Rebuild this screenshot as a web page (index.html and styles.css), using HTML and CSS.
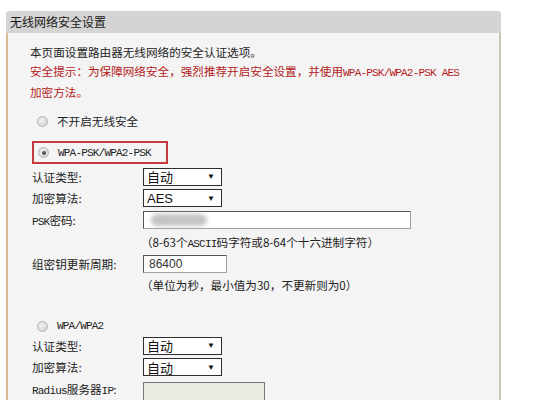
FILE: index.html
```html
<!DOCTYPE html>
<html lang="zh-CN">
<head>
    <meta charset="UTF-8">
    <meta name="viewport" content="width=device-width, initial-scale=1.0">
    <title>无线网络安全设置</title>
    <link rel="stylesheet" href="styles.css">
</head>
<body>
    <div class="panel">
        <div class="panel-title">无线网络安全设置</div>
        <div class="panel-body">
            <p class="intro">本页面设置路由器无线网络的安全认证选项。</p>
            <p class="warn">安全提示：为保障网络安全，强烈推荐开启安全设置，并使用<span class="en">WPA-PSK/WPA2-PSK AES</span><br>加密方法。</p>

            <div class="option"><span class="radio"></span>不开启无线安全</div>

            <div class="option boxed"><span class="radio checked"></span><span class="en">WPA-PSK/WPA2-PSK</span></div>
            <div class="row">
                <span class="label">认证类型:</span>
                <div class="select">自动<span class="arrow">▼</span></div>
            </div>
            <div class="row">
                <span class="label">加密算法:</span>
                <div class="select">AES<span class="arrow">▼</span></div>
            </div>
            <div class="row">
                <span class="label"><span class="en">PSK</span>密码:</span>
                <div class="input wide"><span class="blur"></span></div>
            </div>
            <div class="hint">（8-63个<span class="en">ASCII</span>码字符或8-64个十六进制字符）</div>
            <div class="row">
                <span class="label">组密钥更新周期:</span>
                <div class="input short">86400</div>
            </div>
            <div class="hint">（单位为秒，最小值为30，不更新则为0）</div>

            <div class="option second"><span class="radio"></span><span class="en">WPA/WPA2</span></div>
            <div class="row">
                <span class="label">认证类型:</span>
                <div class="select">自动<span class="arrow">▼</span></div>
            </div>
            <div class="row">
                <span class="label">加密算法:</span>
                <div class="select">自动<span class="arrow">▼</span></div>
            </div>
            <div class="row">
                <span class="label"><span class="en">Radius</span>服务器<span class="en">IP</span>:</span>
                <div class="input disabled"></div>
            </div>
        </div>
    </div>
</body>
</html>
```

FILE: styles.css
```css
body {
    margin: 0;
    background: #fff;
    font-family: "Noto Sans CJK SC", sans-serif;
    font-size: 11.6px;
    color: #222;
    overflow: hidden;
}
.panel {
    margin: 11px 0 0 6px;
    width: 495px;
}
.panel-title {
    height: 22px;
    line-height: 22px;
    padding-left: 4px;
    background: #d4d4d4;
    border-radius: 3px 3px 0 0;
    font-size: 12px;
    color: #1a1a1a;
}
.panel-body {
    height: 357px;
    padding: 10px 0 0 22px;
    background: #f4f4f4;
    border-left: 2px solid #dcb98e;
    border-right: 2px solid #cbc6b4;
    overflow: hidden;
}
.intro, .warn {
    margin: 0;
    line-height: 19px;
}
.warn {
    color: #b31b1b;
}
.en {
    font-family: "Liberation Mono", monospace;
    font-size: 11px;
    letter-spacing: -0.8px;
}
.option {
    display: flex;
    align-items: center;
    height: 18px;
    margin: 10px 0 0 2px;
    padding-left: 5px;
    gap: 9px;
}
.option.boxed {
    width: 128px;
    height: 19px;
    margin-top: 11px;
    padding-left: 4px;
    border: 2px solid #c53a40;
}
.option.second {
    margin-top: 22px;
}
.radio {
    width: 11px;
    height: 11px;
    border-radius: 50%;
    border: 1px solid #b4b4b4;
    background: radial-gradient(circle at 40% 40%, #f2f2f2, #cdcdcd);
    box-sizing: border-box;
    display: flex;
    align-items: center;
    justify-content: center;
}
.radio.checked::after {
    content: "";
    width: 4px;
    height: 4px;
    border-radius: 50%;
    background: #555;
}
.row {
    display: flex;
    align-items: center;
    height: 21.5px;
    margin-left: 2px;
}
.option.boxed + .row {
    margin-top: 2px;
}
.label {
    width: 111px;
    flex-shrink: 0;
}
.select {
    display: flex;
    align-items: center;
    justify-content: space-between;
    width: 79px;
    height: 18px;
    padding: 0 6px 0 3px;
    box-sizing: border-box;
    background: #fff;
    border: 1px solid #2e2e2e;
    font-family: "Liberation Sans", "Noto Sans CJK SC", sans-serif;
    font-size: 13px;
    color: #111;
}
.arrow {
    font-size: 8px;
    color: #111;
}
.input {
    height: 18px;
    line-height: 16px;
    padding-left: 5px;
    box-sizing: border-box;
    background: #fff;
    border: 1px solid #a0a0a0;
    border-top-color: #555;
    border-left-color: #555;
    font-family: "Liberation Sans", sans-serif;
    font-size: 12px;
    color: #333;
}
.input.wide {
    width: 268px;
    display: flex;
    align-items: center;
}
.input.short {
    width: 84px;
}
.input.disabled {
    width: 122px;
    height: 22px;
    align-self: flex-start;
    margin-top: 4px;
    background: #ebebe4;
    border-color: #777;
}
.blur {
    width: 56px;
    height: 12px;
    margin-left: 2px;
    border-radius: 6px;
    background: #c4c4c4;
    filter: blur(2px);
}
.hint {
    height: 23px;
    line-height: 23px;
    padding-left: 111px;
}
.hint + .row + .hint {
    height: 20px;
    line-height: 20px;
}
```
